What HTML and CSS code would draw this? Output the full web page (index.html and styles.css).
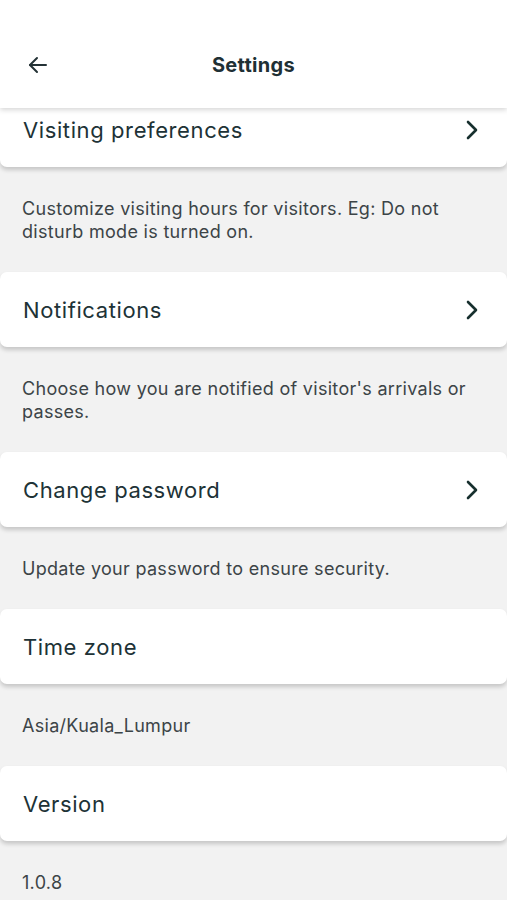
FILE: index.html
```html
<!DOCTYPE html>
<html lang="en">
<head>
  <meta charset="UTF-8">
  <meta name="viewport" content="width=device-width, initial-scale=1.0">
  <title>Settings</title>
  <link rel="stylesheet" href="styles.css">
</head>
<body>

<div class="screen">
  <!-- Top bar -->
  <div class="topbar">
    <button class="back-btn" aria-label="Back">
      <svg width="20" height="18" viewBox="0 0 20 18" fill="none" stroke="#243236" stroke-width="2" stroke-linecap="round" stroke-linejoin="round">
        <path d="M18 9H2"/>
        <path d="M9 2L2 9l7 7"/>
      </svg>
    </button>
    <div class="topbar-title">Settings</div>
    <div class="topbar-spacer"></div>
  </div>

  <!-- Settings list -->
  <div class="list">
    <div class="card card-first">
      <div class="card-label">Visiting preferences</div>
      <svg class="chevron" width="14" height="20" viewBox="0 0 14 20" fill="none" stroke="#17302e" stroke-width="2.6" stroke-linecap="round" stroke-linejoin="round">
        <path d="M3 2l8 8-8 8"/>
      </svg>
    </div>
    <div class="card-text">Customize visiting hours for visitors. Eg: Do not disturb mode is turned on.</div>

    <div class="card">
      <div class="card-label">Notifications</div>
      <svg class="chevron" width="14" height="20" viewBox="0 0 14 20" fill="none" stroke="#17302e" stroke-width="2.6" stroke-linecap="round" stroke-linejoin="round">
        <path d="M3 2l8 8-8 8"/>
      </svg>
    </div>
    <div class="card-text">Choose how you are notified of visitor's arrivals or passes.</div>

    <div class="card">
      <div class="card-label">Change password</div>
      <svg class="chevron" width="14" height="20" viewBox="0 0 14 20" fill="none" stroke="#17302e" stroke-width="2.6" stroke-linecap="round" stroke-linejoin="round">
        <path d="M3 2l8 8-8 8"/>
      </svg>
    </div>
    <div class="card-text">Update your password to ensure security.</div>

    <div class="card">
      <div class="card-label">Time zone</div>
    </div>
    <div class="card-text">Asia/Kuala_Lumpur</div>

    <div class="card">
      <div class="card-label">Version</div>
    </div>
    <div class="card-text">1.0.8</div>
  </div>
</div>

</body>
</html>
```

FILE: styles.css
```css
body {
  font-family: Inter, "Noto Sans", Arial, sans-serif;
  margin: 0;
  padding: 0;
  background-color: #f2f2f2;
}

.screen {
  height: 900px;
  overflow: hidden;
}

.topbar {
  position: relative;
  z-index: 2;
  height: 108px;
  padding-top: 22px;
  box-sizing: border-box;
  display: flex;
  align-items: center;
  background-color: #ffffff;
  box-shadow: 0 2px 5px rgba(0, 0, 0, 0.16);
}

.back-btn {
  width: 76px;
  height: 40px;
  padding: 0 0 0 28px;
  border: none;
  background: none;
  display: flex;
  align-items: center;
  cursor: pointer;
}

.topbar-title {
  flex: 1;
  text-align: center;
  font-size: 20px;
  font-weight: 700;
  color: #1f3035;
  letter-spacing: 0.3px;
}

.topbar-spacer {
  width: 76px;
}

.list {
  display: flex;
  flex-direction: column;
}

.card {
  height: 75px;
  padding: 0 28px 0 23px;
  display: flex;
  align-items: center;
  justify-content: space-between;
  background-color: #ffffff;
  border-radius: 7px;
  box-shadow: 0 3px 4px rgba(0, 0, 0, 0.18);
}

.card-first {
  margin-top: -16px;
}

.card-label {
  font-size: 22px;
  letter-spacing: 0.6px;
  color: #203236;
}

.card-text {
  padding: 30px 40px 29px 22px;
  font-size: 18px;
  letter-spacing: 0.3px;
  line-height: 23px;
  color: #3c4447;
}
```
